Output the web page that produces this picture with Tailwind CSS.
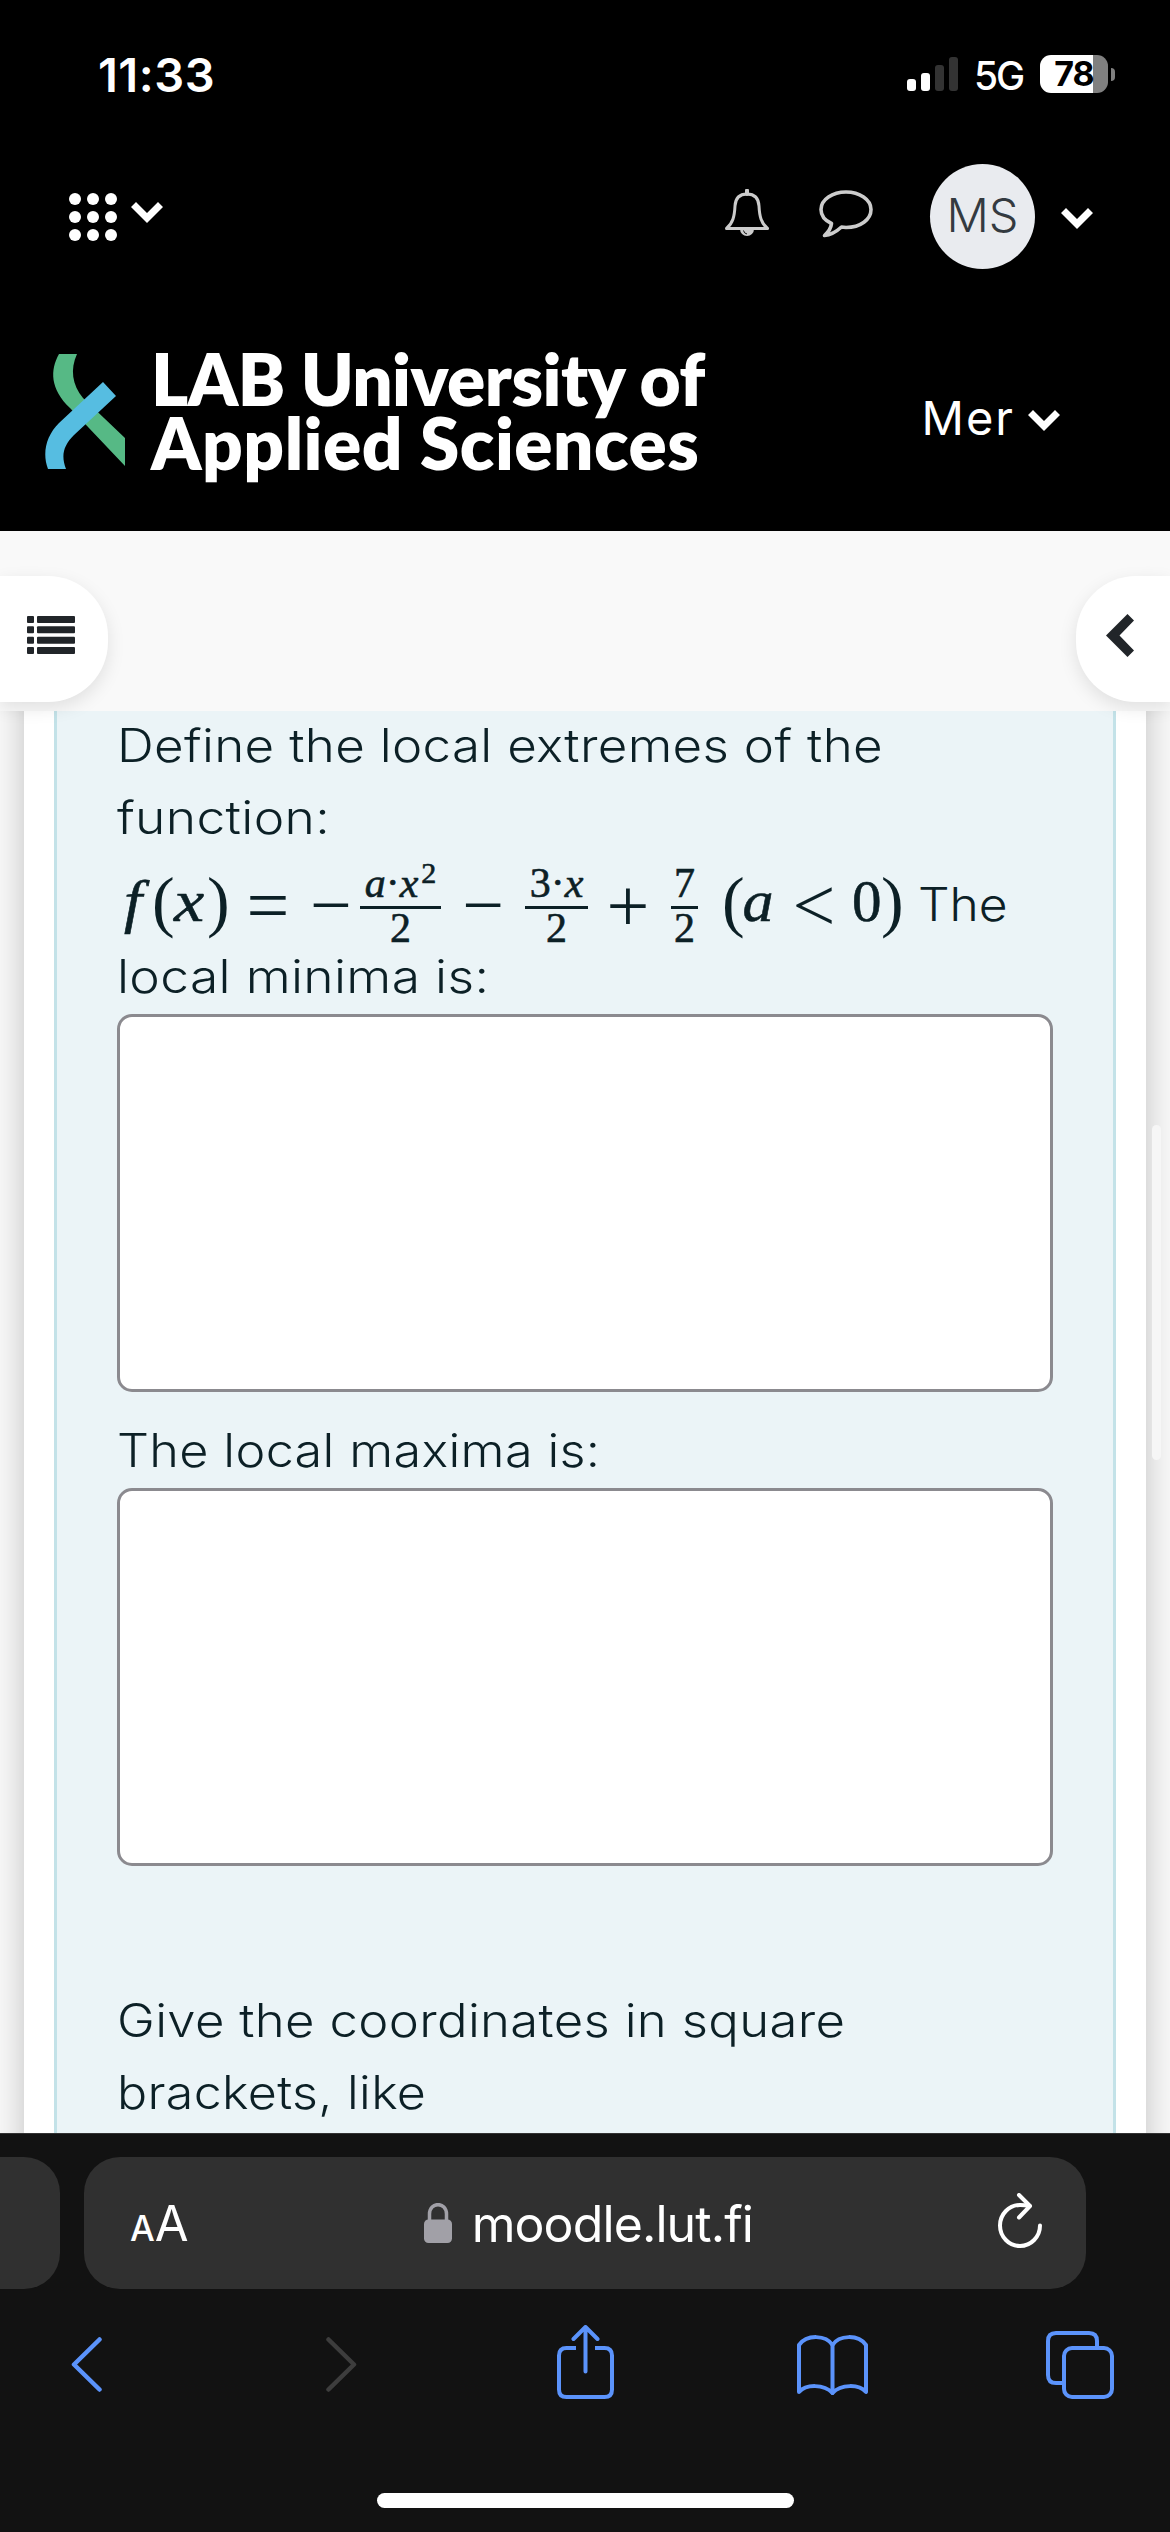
<!DOCTYPE html>
<html lang="en">

<head>
    <meta charset="UTF-8">
    <meta name="viewport" content="width=device-width, initial-scale=1.0">
    <title>LAB University of Applied Sciences</title>
    <script src="https://cdn.jsdelivr.net/npm/@tailwindcss/browser@4"></script>
</head>

<body class="w-[1170px] h-[2532px] overflow-hidden bg-black font-[Inter,sans-serif]">
    <!-- Header -->
    <header class="h-[531px] bg-black text-white">
        <!-- Status bar -->
        <div class="h-[148px] pl-[98px] pr-[55px] flex items-center justify-between">
            <span class="text-[47px] leading-none font-semibold tracking-[0.5px]">11:33</span>
            <div class="flex items-center">
                <div class="flex items-end gap-[5px] h-[34px]">
                    <span class="w-[9px] h-[12px] rounded-[3px] bg-white"></span>
                    <span class="w-[9px] h-[18px] rounded-[3px] bg-white"></span>
                    <span class="w-[9px] h-[26px] rounded-[3px] bg-[#333]"></span>
                    <span class="w-[9px] h-[34px] rounded-[3px] bg-[#333]"></span>
                </div>
                <span class="ml-[16px] mt-[2px] w-[66px] text-[39px] leading-none font-medium tracking-[-2px]">5G</span>
                <div class="w-[68px] h-[38px] rounded-[11px] bg-linear-to-r from-white from-78% to-[#808080] to-78% flex items-center justify-center">
                    <span class="text-[34px] leading-none font-bold text-black tracking-[-1px]">78</span>
                </div>
                <span class="ml-[3px] w-[4px] h-[13px] rounded-r-full bg-[#808080]"></span>
            </div>
        </div>

        <!-- User bar -->
        <div class="h-[137px] pl-[69px] pr-[77px] flex items-center">
            <svg class="w-[48px] h-[48px]" viewBox="0 0 48 48" fill="white">
                <circle cx="6" cy="6" r="6" /><circle cx="24" cy="6" r="6" /><circle cx="42" cy="6" r="6" />
                <circle cx="6" cy="24" r="6" /><circle cx="24" cy="24" r="6" /><circle cx="42" cy="24" r="6" />
                <circle cx="6" cy="42" r="6" /><circle cx="24" cy="42" r="6" /><circle cx="42" cy="42" r="6" />
            </svg>
            <svg class="ml-[14px] mb-[9px] w-[32px] h-[21px]" viewBox="0 0 32 21" fill="white">
                <path d="M5 0 16 11 27 0 32 5 16 21 0 5Z" />
            </svg>
            <svg class="ml-auto mb-[7px] w-[44px] h-[48px]" viewBox="0 0 44 48" fill="none" stroke="#ccc" stroke-width="3" stroke-linejoin="round">
                <path d="M22 1.5V5" stroke-width="4" stroke-linecap="round" />
                <path d="M1.5 39.5C8 34 9.500 27 10 17C10.500 8 15 5 22 5C29 5 33.500 8 34 17C34.500 27 36 34 42.500 39.500Z" />
                <path d="M15 40a7 7 0 0 0 14 0Z" fill="#ccc" stroke="none" />
                <path d="M18.500 41.500Q19 44.500 22 45" stroke="#111" stroke-width="1" />
            </svg>
            <svg class="ml-[50px] mb-[5px] w-[54px] h-[48px]" viewBox="0 0 54 48" fill="none" stroke="#ccc" stroke-width="3.600" stroke-linejoin="round">
                <path d="M27 2C40.500 2 52 9.500 52 19.500C52 29.500 41.500 37.500 27 37.500L22.500 37C17 42 12 45 5.500 45.500C10 41.500 12 38.500 12.500 33.500C6 30.500 2 25.500 2 19.500C2 9.500 13.500 2 27 2Z" />
            </svg>
            <div class="ml-[57px] w-[105px] h-[105px] pb-[3px] rounded-full bg-[#e9ebef] flex items-center justify-center text-[47px] font-light text-[#343a40]">MS</div>
            <svg class="ml-[26px] mt-[4px] w-[32px] h-[21px]" viewBox="0 0 32 21" fill="white">
                <path d="M5 0 16 11 27 0 32 5 16 21 0 5Z" />
            </svg>
        </div>

        <!-- Logo and menu -->
        <div class="h-[246px] pl-[45px] pr-[110px] flex items-start">
            <svg class="mt-[69px] w-[80px] h-[115px]" viewBox="0 0 80 115">
                <path d="M14 0H32C25 15 27 31 38 44L80 84V112L25 54C5 35 5 16 14 0Z" fill="#56b985" />
                <path d="M58 28 71 42 29 81C18 92 16 102 21 115H3C-3 99 1 82 14 69Z" fill="#56bde1" />
            </svg>
            <div class="ml-[26px] mt-[62px] font-[Lato,sans-serif] font-extrabold text-[71px] leading-[64px] whitespace-nowrap">
                <p class="tracking-[-0.5px]">LAB University of</p>
                <p class="tracking-[0.5px]">Applied Sciences</p>
            </div>
            <div class="ml-auto mt-[105px] flex items-center">
                <span class="text-[47px] leading-[56px] tracking-[2px]">Mer</span>
                <svg class="ml-[13px] mt-[4px] w-[32px] h-[21px]" viewBox="0 0 32 21" fill="white">
                    <path d="M5 0 16 11 27 0 32 5 16 21 0 5Z" />
                </svg>
            </div>
        </div>
    </header>

    <!-- Drawer toggles -->
    <div class="relative z-10 h-[180px] pt-[45px] bg-[#f9f9f9] flex items-start justify-between">
        <button class="w-[108px] h-[126px] pl-[27px] rounded-r-[60px] bg-white shadow-[0_6px_18px_rgba(0,0,0,0.1)] flex items-center">
            <svg class="mb-[8px] w-[48px] h-[38px]" viewBox="0 0 48 38" fill="#212529">
                <rect width="7" height="7" rx="1" /><rect x="10" width="38" height="7" rx="1" />
                <rect y="10.300" width="7" height="7" rx="1" /><rect x="10" y="10.300" width="38" height="7" rx="1" />
                <rect y="20.700" width="7" height="7" rx="1" /><rect x="10" y="20.700" width="38" height="7" rx="1" />
                <rect y="31" width="7" height="7" rx="1" /><rect x="10" y="31" width="38" height="7" rx="1" />
            </svg>
        </button>
        <button class="w-[94px] h-[126px] pl-[30px] rounded-l-[60px] bg-white shadow-[0_6px_18px_rgba(0,0,0,0.1)] flex items-center">
            <svg class="mb-[8px] w-[28px] h-[43px]" viewBox="0 0 28 43" fill="#212529">
                <path d="M21.500 0 28 6.500 13.500 21.500 28 36.500 21.500 43 0 21.500Z" />
            </svg>
        </button>
    </div>

    <!-- Question -->
    <main class="relative h-[1422px] px-[24px] bg-[#f8f8f8] overflow-hidden">
        <div class="-mt-[40px] pt-[40px] h-[1520px] px-[30px] bg-white shadow-[0_0_30px_rgba(0,0,0,0.22)]">
            <div class="h-full px-[60px] border-x-3 border-[#c3e2e8] bg-[#ebf4f7] text-[46px] leading-[72px] font-[350] text-[#0c2026] whitespace-nowrap">
                <p class="h-[70px] leading-[68px] tracking-[0.3px] origin-left scale-x-[1.11]">Define the local extremes of the</p>
                <p class="tracking-[0.3px] origin-left scale-x-[1.12]">function:</p>
                <div class="h-[87px] flex font-['Liberation_Serif',serif] font-normal text-[59px] leading-[96px] text-center [-webkit-text-stroke:0.6px_#0c2026]">
                    <i class="w-[32px] mr-[3px] scale-x-110">f</i>
                    <span class="w-[19px] text-[68px] [-webkit-text-stroke:0px]">(</span>
                    <i class="w-[36px] scale-x-115">x</i>
                    <span class="w-[19px] text-[68px] [-webkit-text-stroke:0px]">)</span>
                    <span class="w-[84px] text-[76px] leading-[104px] [-webkit-text-stroke:0px]">=</span>
                    <span class="w-[41px] mr-[9px] text-[74px] leading-[104px] [-webkit-text-stroke:0px]">−</span>
                    <span class="w-[81px] flex flex-col text-[42px]">
                        <span class="h-[53px] shrink-0 leading-[60px]"><i>a</i>·<i>x</i><span class="relative -top-[14px] ml-[3px] text-[30px] leading-none">2</span></span>
                        <span class="h-[3px] shrink-0 bg-[#0c2026]"></span>
                        <span class="leading-[38px]">2</span>
                    </span>
                    <span class="w-[84px] text-[74px] leading-[104px] [-webkit-text-stroke:0px]">−</span>
                    <span class="w-[63px] flex flex-col text-[42px]">
                        <span class="h-[53px] shrink-0 leading-[60px]">3·<i>x</i></span>
                        <span class="h-[3px] shrink-0 bg-[#0c2026]"></span>
                        <span class="leading-[38px]">2</span>
                    </span>
                    <span class="w-[80px] mr-[3px] text-[76px] leading-[104px] [-webkit-text-stroke:0px]">+</span>
                    <span class="w-[27px] flex flex-col text-[42px]">
                        <span class="h-[53px] shrink-0 leading-[60px]">7</span>
                        <span class="h-[3px] shrink-0 bg-[#0c2026]"></span>
                        <span class="leading-[38px]">2</span>
                    </span>
                    <span class="w-[18px] ml-[24px] text-[68px] [-webkit-text-stroke:0px]">(</span>
                    <i class="w-[36px] scale-x-105">a</i>
                    <span class="w-[76px] text-[76px] leading-[104px] [-webkit-text-stroke:0px]">&lt;</span>
                    <span class="w-[29px]">0</span>
                    <span class="w-[20px] text-[68px] [-webkit-text-stroke:0px]">)</span>
                    <span class="ml-[17px] font-[Inter,sans-serif] font-[350] text-[46px] leading-[103px] origin-left scale-x-[1.08] [-webkit-text-stroke:0px]">The</span>
                </div>
                <p class="tracking-[0.3px] origin-left scale-x-[1.12]">local minima is:</p>
                <div class="mt-[2px] h-[378px] rounded-[15px] border-3 border-[#8b8a8f] bg-white"></div>
                <p class="mt-[22px] tracking-[0.3px] origin-left scale-x-[1.095]">The local maxima is:</p>
                <div class="mt-[2px] h-[378px] rounded-[15px] border-3 border-[#8b8a8f] bg-white"></div>
                <p class="mt-[118px] tracking-[0.3px] origin-left scale-x-[1.105]">Give the coordinates in square</p>
                <p class="tracking-[0.3px] origin-left scale-x-[1.09]">brackets, like</p>
            </div>
        </div>
        <!-- Scroll indicator -->
        <div class="absolute right-[9px] top-[414px] w-[9px] h-[335px] rounded-full bg-[#f6f6f6]"></div>
    </main>

    <!-- Browser toolbar -->
    <footer class="h-[399px] pt-[23px] border-t border-[#333] bg-[#121212]">
        <div class="flex h-[132px]">
            <div class="w-[60px] rounded-r-[36px] bg-[#303030]"></div>
            <div class="ml-[24px] w-[1002px] pl-[46px] pr-[44px] rounded-[36px] bg-[#303030] text-white flex items-center">
                <div class="flex items-baseline leading-none">
                    <span class="text-[35px] font-medium">A</span>
                    <span class="text-[49px]">A</span>
                </div>
                <svg class="ml-[235px] mb-[1px] w-[28px] h-[40px]" viewBox="0 0 28 40">
                    <rect y="16.500" width="28" height="23.500" rx="4.500" fill="#a1a0a7" />
                    <path d="M5.500 18V11C5.500 -1.500 22.500 -1.500 22.500 11V18" fill="none" stroke="#a1a0a7" stroke-width="3.500" />
                </svg>
                <span class="ml-[20px] mt-[2px] text-[50px] leading-none tracking-[-0.9px]">moodle.lut.fi</span>
                <svg class="ml-auto mb-[5px] w-[44px] h-[55px]" viewBox="0 0 44 55" fill="none" stroke="white" stroke-width="4" stroke-linecap="round" stroke-linejoin="round">
                    <path d="M42 32.500A20 20.500 0 1 1 22 12Q27 12 31.500 13" />
                    <path d="M21 2 32 13 21 24.500" />
                </svg>
            </div>
        </div>
        <div class="mt-[36px] h-[74px] pl-[71px] pr-[56px] flex items-start text-[#5b93fb]">
            <svg class="mt-[12px] w-[31px] h-[55px]" viewBox="0 0 31 55" fill="none" stroke="currentColor" stroke-width="4.500" stroke-linecap="round" stroke-linejoin="round">
                <path d="M28.500 2.500 3 27.500 28.500 52.500" />
            </svg>
            <svg class="ml-[224px] mt-[12px] w-[31px] h-[55px]" viewBox="0 0 31 55" fill="none" stroke="#3d3d3d" stroke-width="4.500" stroke-linecap="round" stroke-linejoin="round">
                <path d="M2.500 2.500 28 27.500 2.500 52.500" />
            </svg>
            <svg class="ml-[200px] w-[57px] h-[74px]" viewBox="0 0 57 74" fill="none" stroke="currentColor" stroke-width="4" stroke-linecap="round">
                <path d="M19 23H9.500Q2 23 2 30.500V64.500Q2 72 9.500 72H47.500Q55 72 55 64.500V30.500Q55 23 47.500 23H38" stroke-linecap="butt" />
                <path d="M28.500 46.500V3M16.500 14 28.500 2 40.500 14" stroke-linejoin="round" />
            </svg>
            <svg class="ml-[183px] mt-[10px] w-[71px] h-[60px]" viewBox="0 0 71 60" fill="none" stroke="currentColor" stroke-width="4" stroke-linecap="round" stroke-linejoin="round">
                <path d="M35.500 10C29 0 10 -1 2 10V57C9 49 27 49 35.500 58C44 49 62 49 69 57V10C61 -1 42 0 35.500 10Z" />
                <path d="M35.500 10V58" />
            </svg>
            <svg class="ml-auto mt-[6px] w-[68px] h-[68px]" viewBox="0 0 68 68" fill="none" stroke="currentColor" stroke-width="4">
                <path d="M17 52H10Q2 52 2 44V10Q2 2 10 2H43Q51 2 51 10V16" />
                <rect x="18" y="17" width="48" height="49" rx="8" />
            </svg>
        </div>
        <div class="mt-[94px] mx-auto w-[417px] h-[15px] rounded-full bg-white"></div>
    </footer>
</body>

</html>
